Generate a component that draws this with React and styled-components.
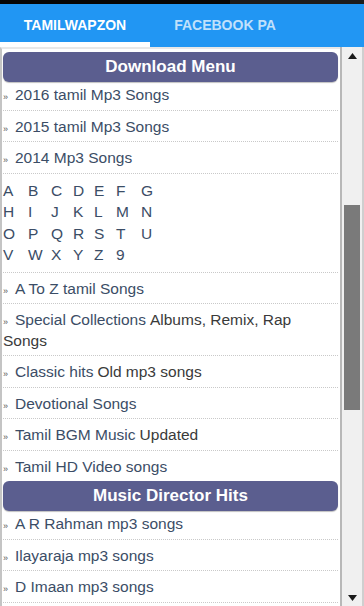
import React from 'react'
import styled, { createGlobalStyle } from 'styled-components'

const GlobalStyle = createGlobalStyle`
  html, body {
    margin: 0;
    padding: 0;
    overflow: hidden;
    background: #fff;
    font-family: "Liberation Sans", Arial, sans-serif;
  }
`

const Screen = styled.div`
  width: 364px;
  height: 606px;
  display: flex;
  flex-direction: column;
  overflow: hidden;
`

const StatusStrip = styled.div`
  height: 4px;
  background: linear-gradient(to right, #050505 0, #050505 230px, #1c1c1c 230px);
`

const TabBar = styled.div`
  height: 43px;
  background: #2196f3;
  display: flex;
  overflow: hidden;
`

const Tab = styled.div`
  flex: 0 0 150px;
  display: flex;
  align-items: center;
  justify-content: center;
  padding-top: 3px;
  box-sizing: border-box;
  font-size: 14px;
  font-weight: bold;
  text-transform: uppercase;
  white-space: nowrap;
  color: ${props => props.active ? '#ffffff' : 'rgba(255, 255, 255, 0.72)'};
  border-bottom: 5px solid ${props => props.active ? '#ffffff' : 'transparent'};
`

const Body = styled.div`
  flex: 1;
  display: flex;
  min-height: 0;
`

const Content = styled.div`
  flex: 1;
  min-width: 0;
  overflow: hidden;
  border-left: 2px solid #c4c4c4;
  border-top: 2px solid #e8e8e8;
  padding: 3px 2px 0 1px;
  background: #fff;
`

const SectionHeader = styled.div`
  height: 30px;
  margin-bottom: 2px;
  border-radius: 6px;
  background: #5b5e8f;
  box-shadow: 0 1px 1px rgba(0, 0, 0, 0.25);
  color: #fff;
  font-size: 17px;
  font-weight: bold;
  display: flex;
  align-items: center;
  justify-content: center;
`

const Row = styled.div`
  padding: ${props => props.first ? '1px' : '6px'} 0 4px 0;
  line-height: 20.5px;
  font-size: 15.5px;
  color: #3a3a3a;
  border-bottom: ${props => props.last ? 'none' : '1px dotted #c9c9c9'};
`

const Bullet = styled.span`
  display: inline-block;
  width: 12px;
  font-size: 9px;
  line-height: 0;
  color: #555;
`

const Link = styled.span`
  color: #3b4d66;
  margin-right: 4px;
`

const Letters = styled.div`
  display: grid;
  grid-template-columns: 25px 23px 22px 21px 22px 25px 22px;
  padding: 6px 0;
  font-size: 15.5px;
  line-height: 21.5px;
  color: #3b4d66;
  border-bottom: 1px dotted #c9c9c9;
`

const ScrollBar = styled.div`
  flex: 0 0 20px;
  display: flex;
  flex-direction: column;
  align-items: center;
  background: #f0f0f0;
  border-left: 2px solid #b8b8b8;
  border-right: 2px solid #cfcfcf;
`

const Arrow = styled.div`
  height: 17px;
  width: 100%;
  display: flex;
  align-items: center;
  justify-content: center;
  svg { display: block; }
`

const Track = styled.div`
  flex: 1;
  width: 100%;
  padding-top: ${props => props.offset}px;
  box-sizing: border-box;
  display: flex;
  justify-content: center;
`

const Thumb = styled.div`
  width: 16px;
  height: ${props => props.size}px;
  background: #7a7a7a;
`

const downloads = [
  { link: '2016 tamil Mp3 Songs' },
  { link: '2015 tamil Mp3 Songs' },
  { link: '2014 Mp3 Songs' },
  { letters: true },
  { link: 'A To Z tamil Songs' },
  { link: 'Special Collections', note: 'Albums, Remix, Rap Songs' },
  { link: 'Classic hits', note: 'Old mp3 songs' },
  { link: 'Devotional Songs' },
  { link: 'Tamil BGM Music', note: 'Updated' },
  { link: 'Tamil HD Video songs' },
]

const directors = [
  { link: 'A R Rahman mp3 songs' },
  { link: 'Ilayaraja mp3 songs' },
  { link: 'D Imaan mp3 songs' },
]

const alphabet = 'ABCDEFGHIJKLMNOPQRSTUVWXYZ9'.split('')

// openEnd: the section continues below the fold, so its last row keeps its divider
const MenuRows = ({ items, openEnd }) => items.map((item, i) => {
  if (item.letters) {
    return (
      <Letters key="letters">
        {alphabet.map(ch => <span key={ch}>{ch}</span>)}
      </Letters>
    )
  }
  return (
    <Row key={item.link} first={i === 0} last={!openEnd && i === items.length - 1}>
      <Bullet>»</Bullet>
      <Link>{item.link}</Link>
      {item.note}
    </Row>
  )
})

const App = () => {
  return (
    <Screen>
      <GlobalStyle />
      <StatusStrip />
      <TabBar>
        <Tab active>Tamilwapzon</Tab>
        <Tab>Facebook Pa</Tab>
      </TabBar>
      <Body>
        <Content>
          <SectionHeader>Download Menu</SectionHeader>
          <MenuRows items={downloads} />
          <SectionHeader>Music Director Hits</SectionHeader>
          <MenuRows items={directors} openEnd />
        </Content>
        <ScrollBar>
          <Arrow>
            <svg width="9" height="6" viewBox="0 0 9 6"><path d="M4.5 0 L9 6 L0 6 Z" fill="#1a1a1a" /></svg>
          </Arrow>
          <Track offset={141}>
            <Thumb size={205} />
          </Track>
          <Arrow>
            <svg width="9" height="6" viewBox="0 0 9 6"><path d="M0 0 L9 0 L4.5 6 Z" fill="#1a1a1a" /></svg>
          </Arrow>
        </ScrollBar>
      </Body>
    </Screen>
  )
}

export default App
